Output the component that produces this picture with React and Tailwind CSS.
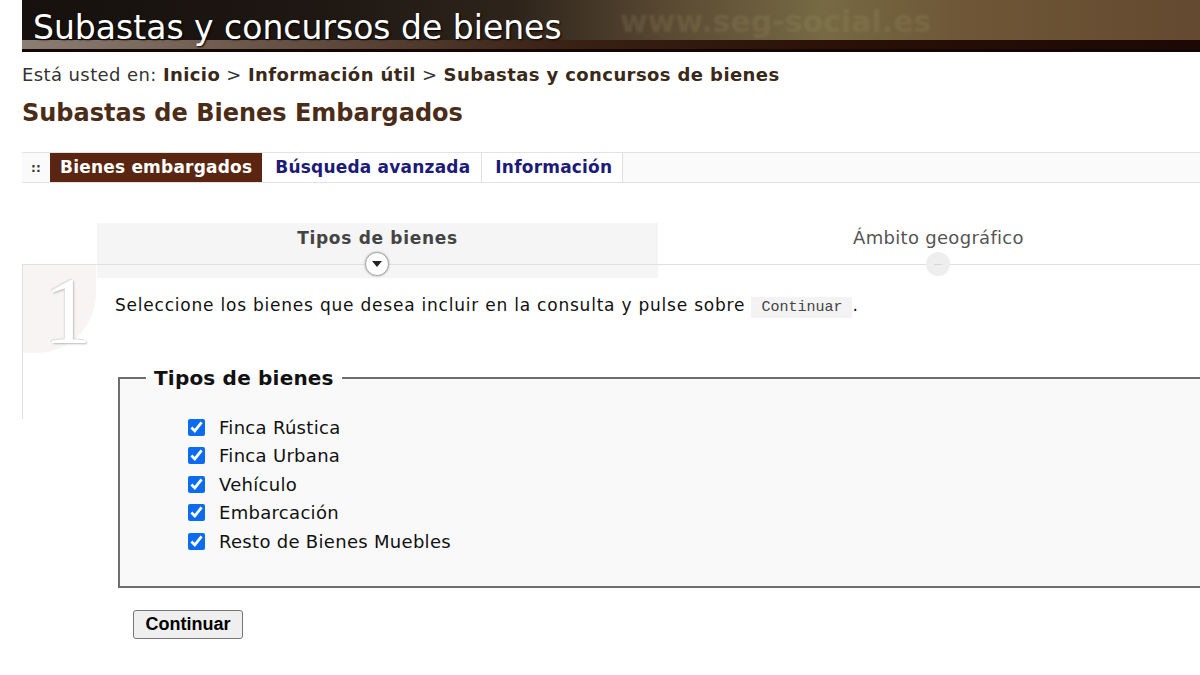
import React from "react";

const items = ["Finca Rústica", "Finca Urbana", "Vehículo", "Embarcación", "Resto de Bienes Muebles"];

export default function App() {
  return (
    <div className="w-[1200px] h-[675px] overflow-hidden bg-white font-['DejaVu_Sans',sans-serif] text-black">
      {/* Header banner */}
      <div className="ml-[22px] h-[52px] relative overflow-hidden bg-[linear-gradient(90deg,#16110e_0%,#1e1712_25%,#2e241b_42%,#5a4a33_55%,#766a44_68%,#6e5636_80%,#634a30_100%)]">
        <div className="absolute left-0 right-0 bottom-0 h-[12px] bg-[linear-gradient(90deg,#8c7e74_0%,#6a5648_20%,#3a2214_45%,#2a1006_70%,#1c0804_100%)]"></div>
        <div className="absolute left-0 right-0 bottom-0 h-[3px] bg-[#140604]"></div>
        <div className="absolute left-[598px] top-[4px] text-[30px] font-bold leading-[36px] text-[#a09868] opacity-20 blur-[1px]">www.seg-social.es</div>
        <div className="relative pl-[11px] pt-[9px] text-[33px] leading-[38px] text-white [text-shadow:1px_1px_2px_#000]">Subastas y concursos de bienes</div>
      </div>

      <div className="pl-[22px]">
        {/* breadcrumb */}
        <div className="mt-[12px] text-[18px] leading-[22px] tracking-[0.4px] text-[#333]">
          Está usted en: <b className="text-[#3a2818]">Inicio</b> &gt; <b className="text-[#3a2818]">Información útil</b> &gt; <b className="text-[#3a2818]">Subastas y concursos de bienes</b>
        </div>
        {/* title */}
        <h1 className="mt-[12px] text-[24px] leading-[30px] font-bold tracking-[0px] text-[#4a2c18]">Subastas de Bienes Embargados</h1>

        {/* tabs */}
        <div className="mt-[24px] h-[31px] flex items-stretch border-y border-[#e2e2e2] bg-[#fafafa] text-[17px] tracking-[0.2px] font-bold">
          <div className="w-[28px] flex items-center justify-center text-[12px] text-[#333]">::</div>
          <div className="px-[10px] flex items-center bg-[#5a2612] text-white">Bienes embargados</div>
          <div className="pl-[13px] pr-[11px] flex items-center bg-white text-[#1e1a78] border-r border-[#e0e0e0]">Búsqueda avanzada</div>
          <div className="pl-[13px] pr-[10px] flex items-center bg-white text-[#1e1a78] border-r border-[#e0e0e0]">Información</div>
        </div>

        {/* steps */}
        <div className="mt-[40px] relative">
          <div className="absolute left-[75px] top-0 w-[561px] h-[55px] bg-[#f5f5f5]"></div>
          <div className="relative h-[41px] flex pl-[75px]">
            <div className="relative w-[561px] shrink-0 text-center">
              <div className="mt-[4px] text-[17px] leading-[22px] tracking-[0.7px] font-bold text-[#444]">Tipos de bienes</div>
              <div className="absolute left-[190px] w-[180px] bottom-[-1px] h-px bg-[linear-gradient(90deg,transparent,#222_20%,#222_80%,transparent)]"></div>
              <div className="absolute left-[268px] bottom-[-12px] w-[24px] h-[24px] rounded-full bg-white border border-[#aaa] shadow-[0_0_2px_#999] flex items-center justify-center z-10">
                <svg width="10" height="7" viewBox="0 0 10 7"><path d="M0 0 L10 0 L5 6 Z" fill="#222" /></svg>
              </div>
            </div>
            <div className="relative w-[561px] shrink-0 text-center">
              <div className="mt-[4px] text-[18px] leading-[22px] tracking-[0.3px] text-[#555]">Ámbito geográfico</div>
              <div className="absolute left-[268px] bottom-[-12px] w-[24px] h-[24px] rounded-full bg-[#eeeeee] flex items-center justify-center z-10">
                <div className="w-[8px] h-px bg-[#d6d6d6]"></div>
              </div>
            </div>
          </div>

          {/* content */}
          <div className="relative flex items-start border-t border-[#e0e0e0]">
            <div className="w-[73px] h-[154px] border-l border-[#e0e0e0] shrink-0">
              <div className="w-[73px] h-[88px] bg-[#f8f4f4] rounded-br-[60px] flex items-start justify-center">
                <span className="mt-[2px] ml-[16px] font-['Liberation_Serif',serif] text-[96px] leading-[88px] text-white [text-shadow:1px_1px_2px_#bbb,-1px_-1px_1px_#ddd]">1</span>
              </div>
            </div>
            <div className="flex-1">
              <p className="mt-[28px] pl-[20px] text-[17px] leading-[24px] tracking-[0.78px] text-[#111]">
                Seleccione los bienes que desea incluir en la consulta y pulse sobre{" "}
                <code className="font-['Liberation_Mono',monospace] text-[15px] tracking-[0px] text-[#444] bg-[#f3f3f3] px-[10px] py-[2px]">Continuar</code>.
              </p>
              <fieldset className="mt-[46px] ml-[23px] w-[1110px] border-2 border-[#6e6e6e] bg-[#f9f9f9] px-[26px] pb-[30px]">
                <legend className="px-[8px] text-[20px] leading-[24px] tracking-[0.2px] font-bold text-[#111]">Tipos de bienes</legend>
                <div className="pt-[23px] pl-[42px]">
                  {items.map((t) => (
                    <label key={t} className="h-[28.5px] flex items-center gap-[14px] text-[18px] tracking-[0.3px] text-[#111]">
                      <input type="checkbox" defaultChecked className="w-[17px] h-[17px] m-0 accent-[#0b6cf0]" />
                      <span>{t}</span>
                    </label>
                  ))}
                </div>
              </fieldset>
              <button className="mt-[22px] ml-[38px] w-[110px] h-[29px] rounded-[3px] border border-[#767676] bg-[#efefef] font-['Liberation_Sans',sans-serif] font-bold text-[18px] text-black">Continuar</button>
            </div>
          </div>
        </div>
      </div>
    </div>
  );
}
